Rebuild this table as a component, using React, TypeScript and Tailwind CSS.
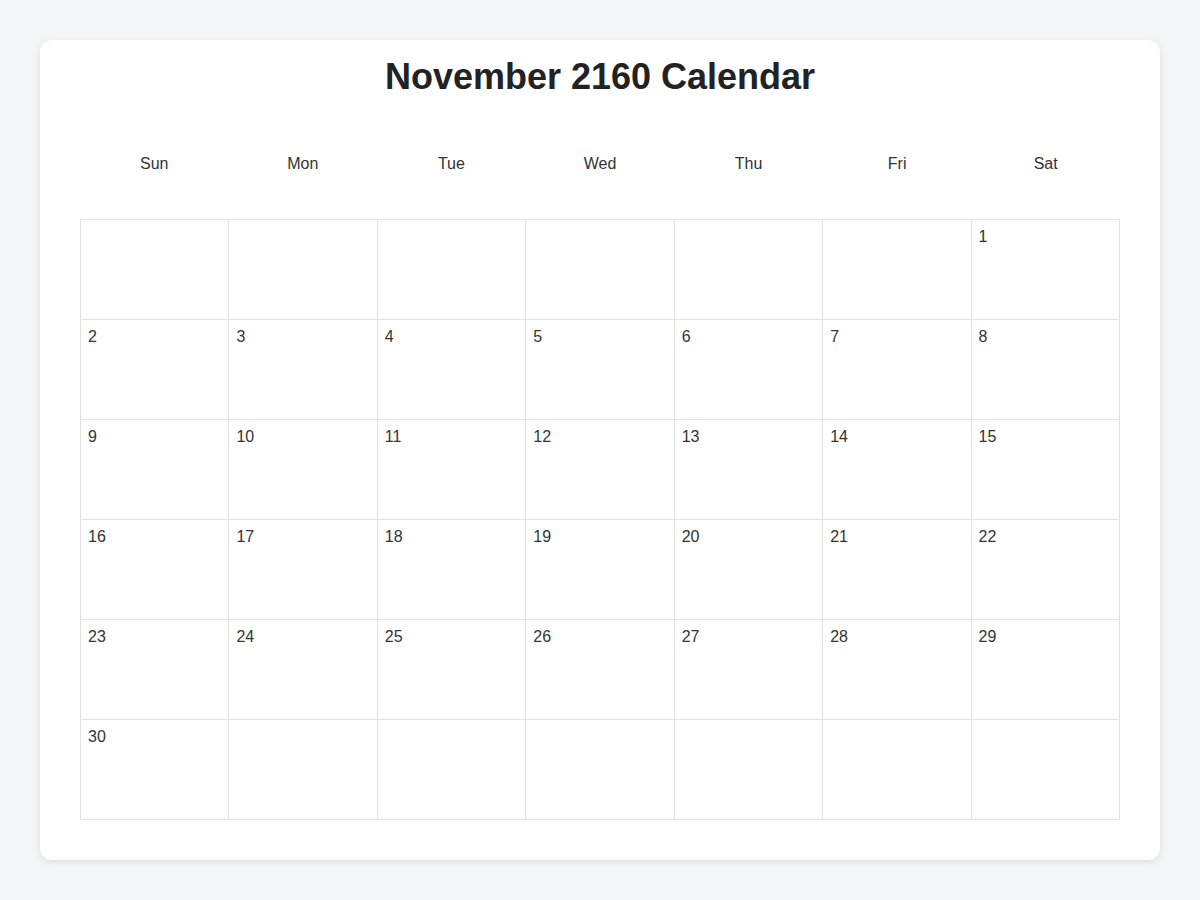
import React from "react";

const days = ["Sun", "Mon", "Tue", "Wed", "Thu", "Fri", "Sat"];

export default function App() {
  const cells: (number | null)[] = [];
  for (let i = 0; i < 6; i++) cells.push(null);
  for (let d = 1; d <= 30; d++) cells.push(d);
  while (cells.length < 42) cells.push(null);

  return (
    <div
      className="min-h-[900px] w-full bg-[#f5f6f8] pt-[40px]"
      style={{ fontFamily: '"Liberation Sans", Arial, sans-serif' }}
    >
      <div className="mx-[40px] rounded-[12px] bg-white px-[40px] pt-[20px] pb-[40px] shadow-[0_2px_10px_rgba(0,0,0,0.1)]">
        <h1 className="text-center text-[36px] font-bold leading-[34px] text-[#222]">
          November 2160 Calendar
        </h1>
        <div className="mt-[13px] grid h-[112px] grid-cols-7 items-center pt-[2px]">
          {days.map((d) => (
            <div key={d} className="text-center text-[16px] text-[#333]">
              {d}
            </div>
          ))}
        </div>
        <div className="grid grid-cols-7 border-t border-l border-[#e2e2e2]">
          {cells.map((c, i) => (
            <div
              key={i}
              className="h-[100px] border-r border-b border-[#e2e2e2] px-[7px] pt-[8px] text-[16px] leading-[18px] text-[#333]"
            >
              {c ?? ""}
            </div>
          ))}
        </div>
      </div>
    </div>
  );
}
